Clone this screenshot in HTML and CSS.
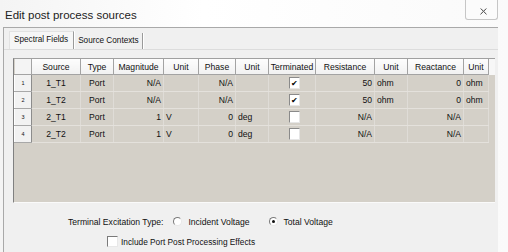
FILE: index.html
```html
<!DOCTYPE html>
<html>
<head>
<meta charset="utf-8">
<link rel="stylesheet" href="styles.css">
</head>
<body>
<div class="window">
  <div class="titlebar">
    <div class="title">Edit post process sources</div>
    <div class="close">
      <svg width="7" height="7" viewBox="0 0 7 7"><path d="M0.5 0.5 L6.5 6.5 M6.5 0.5 L0.5 6.5" stroke="#666" stroke-width="1" fill="none"/><path d="M1.5 0.5 L6.5 5.5 M5.5 0.5 L0.5 5.5" stroke="#aaa" stroke-width="0.5" fill="none"/></svg>
    </div>
  </div>
  <div class="dialog">
    <div class="tabs">
      <div class="tab active">Spectral Fields</div>
      <div class="tab">Source Contexts</div>
    </div>
    <div class="panel">
      <div class="grid">
        <table class="table">
          <colgroup>
            <col class="c-rh"><col class="c-src"><col class="c-type"><col class="c-mag"><col class="c-u1"><col class="c-ph"><col class="c-u2"><col class="c-term"><col class="c-res"><col class="c-u3"><col class="c-rea"><col class="c-u4"><col class="c-fill">
          </colgroup>
          <thead>
            <tr>
              <th class="corner"></th><th>Source</th><th>Type</th><th>Magnitude</th><th>Unit</th><th>Phase</th><th>Unit</th><th>Terminated</th><th>Resistance</th><th>Unit</th><th>Reactance</th><th>Unit</th><th class="fill"></th>
            </tr>
          </thead>
          <tbody>
            <tr>
              <td class="rh">1</td><td class="ctr">1_T1</td><td class="ctr">Port</td><td class="num">N/A</td><td class="unit"></td><td class="num">N/A</td><td class="unit"></td><td class="ctr"><span class="cb checked">&#10004;</span></td><td class="num">50</td><td class="unit">ohm</td><td class="num">0</td><td class="unit">ohm</td><td class="fill"></td>
            </tr>
            <tr>
              <td class="rh">2</td><td class="ctr">1_T2</td><td class="ctr">Port</td><td class="num">N/A</td><td class="unit"></td><td class="num">N/A</td><td class="unit"></td><td class="ctr"><span class="cb checked">&#10004;</span></td><td class="num">50</td><td class="unit">ohm</td><td class="num">0</td><td class="unit">ohm</td><td class="fill"></td>
            </tr>
            <tr>
              <td class="rh">3</td><td class="ctr">2_T1</td><td class="ctr">Port</td><td class="num">1</td><td class="unit">V</td><td class="num">0</td><td class="unit">deg</td><td class="ctr"><span class="cb"></span></td><td class="num">N/A</td><td class="unit"></td><td class="num">N/A</td><td class="unit"></td><td class="fill"></td>
            </tr>
            <tr>
              <td class="rh">4</td><td class="ctr">2_T2</td><td class="ctr">Port</td><td class="num">1</td><td class="unit">V</td><td class="num">0</td><td class="unit">deg</td><td class="ctr"><span class="cb"></span></td><td class="num">N/A</td><td class="unit"></td><td class="num">N/A</td><td class="unit"></td><td class="fill"></td>
            </tr>
          </tbody>
        </table>
      </div>
      <div class="options">
        <div class="opt-row row1">
          <span class="label">Terminal Excitation Type:</span>
          <span class="radio"></span><span class="rlabel">Incident Voltage</span>
          <span class="radio on"></span><span class="rlabel">Total Voltage</span>
        </div>
        <div class="opt-row row2">
          <span class="box"></span><span class="rlabel small">Include Port Post Processing Effects</span>
        </div>
      </div>
    </div>
  </div>
</div>
</body>
</html>
```

FILE: styles.css
```css
html, body {
  margin: 0;
  padding: 0;
  background: #ffffff;
}
body {
  width: 508px;
  height: 252px;
  overflow: hidden;
  font-family: "Liberation Sans", Arial, sans-serif;
  color: #111;
}
.window {
  display: flex;
  flex-direction: column;
  height: 252px;
  background: linear-gradient(90deg, #f4f4f4 0%, #ffffff 40%, #fafafa 100%);
}
.titlebar {
  height: 27px;
  display: flex;
  justify-content: space-between;
  align-items: flex-start;
  padding-left: 5px;
}
.title {
  font-size: 11.5px;
  line-height: 14px;
  padding-top: 8px;
  color: #222;
}
.close {
  width: 33px;
  height: 20px;
  margin-right: 10px;
  border: 1px solid #c6c6c6;
  border-top: none;
  border-radius: 0 0 3px 3px;
  background: #fbfbfb;
  display: flex;
  align-items: center;
  justify-content: center;
  padding: 4px 0 0 4px;
  box-sizing: border-box;
}
.dialog {
  margin-left: 3px;
  width: 494px;
  flex: 1;
  border-top: 1px solid #a9a9a9;
  border-left: 1px solid #a9a9a9;
  background: #f0f0f0;
  display: flex;
  flex-direction: column;
}
.tabs {
  height: 21px;
  display: flex;
  align-items: flex-end;
  padding-left: 5px;
}
.tab {
  font-size: 8.2px;
  height: 16px;
  line-height: 16px;
  padding: 0 3px 0 4px;
  border-right: 1px solid #9a9a9a;
  box-shadow: 1px 0 0 #ffffff;
  color: #111;
}
.tab.active {
  background: #f6f6f6;
  border-left: 1px solid #e2e2e2;
  border-top: 1px solid #e2e2e2;
  height: 17px;
  padding-left: 4px;
  padding-right: 5px;
}
.panel {
  flex: 1;
  border-top: 1px solid #dcdcdc;
  padding: 8px 0 0 9px;
  display: flex;
  flex-direction: column;
}
.grid {
  width: 482px;
  height: 145px;
  background: #d4d0c8;
  border-left: 1px solid #808080;
  border-top: 1px solid #a0a0a0;
  box-sizing: border-box;
  border-bottom: 1px solid #fafafa;
}
.table {
  border-collapse: collapse;
  table-layout: fixed;
  width: 481px;
  font-size: 8.6px;
}
.c-rh { width: 17px; }
.c-src { width: 49px; }
.c-type { width: 33px; }
.c-mag { width: 50px; }
.c-u1 { width: 35px; }
.c-ph { width: 37px; }
.c-u2 { width: 33px; }
.c-term { width: 47px; }
.c-res { width: 59px; }
.c-u3 { width: 33px; }
.c-rea { width: 56px; }
.c-u4 { width: 25px; }
.c-fill { width: 7px; }
th {
  height: 15px;
  padding: 0;
  font-weight: normal;
  background: linear-gradient(#fdfdfd, #f1f1f1);
  border-right: 1px solid #a3a3a3;
  border-bottom: 1px solid #a3a3a3;
  text-align: center;
  color: #111;
  white-space: nowrap;
  overflow: hidden;
}
th.corner {
  background: #f4f4f4;
}
th.fill {
  border-right: none;
  border-bottom: none;
  background: #f7f7f7;
}
td {
  height: 16px;
  padding: 0;
  border-right: 1px solid #dfdcd7;
  border-bottom: 1px solid #e4e1dc;
  white-space: nowrap;
  overflow: hidden;
  color: #111;
}
td.fill {
  border: none;
}
td.rh {
  background: #f2f2f2;
  font-size: 5.5px;
  text-align: center;
  border-top: 1px solid #ffffff;
  border-left: 1px solid #ffffff;
  border-right: 1px solid #8c8c8c;
  border-bottom: 1px solid #a8a8a8;
}
td.ctr { text-align: center; }
td.num { text-align: right; padding-right: 2px; }
td.unit { text-align: left; padding-left: 2px; }
.cb {
  display: inline-block;
  width: 11px;
  height: 12px;
  vertical-align: middle;
  background: #ffffff;
  border-top: 1px solid #8a8a8a;
  border-left: 1px solid #8a8a8a;
  border-right: 1px solid #e6e6e6;
  border-bottom: 1px solid #e6e6e6;
  box-sizing: border-box;
  font-size: 8px;
  line-height: 11px;
  text-align: center;
  color: #000;
  margin-left: 4px;
}
.options {
  display: flex;
  flex-direction: column;
  padding-top: 12px;
  font-size: 8.6px;
}
.opt-row {
  display: flex;
  align-items: center;
  height: 13px;
}
.row1 { padding-left: 55px; }
.row2 { padding-left: 94px; margin-top: 7px; }
.label { margin-right: 10px; }
.radio {
  width: 7px;
  height: 7px;
  border-radius: 50%;
  border-top: 1px solid #7a7a7a;
  border-left: 1px solid #7a7a7a;
  border-right: 1px solid #e8e8e8;
  border-bottom: 1px solid #e8e8e8;
  background: #ffffff;
  margin-right: 6px;
  position: relative;
}
.radio.on::after {
  content: "";
  position: absolute;
  left: 2px;
  top: 2px;
  width: 3px;
  height: 3px;
  border-radius: 50%;
  background: #111;
}
.rlabel + .radio { margin-left: 19px; }
.rlabel.small { font-size: 8.3px; }
.box {
  width: 9px;
  height: 9px;
  background: #ffffff;
  border-top: 1px solid #7a7a7a;
  border-left: 1px solid #7a7a7a;
  border-right: 1px solid #e8e8e8;
  border-bottom: 1px solid #e8e8e8;
  margin-right: 3px;
}
```
